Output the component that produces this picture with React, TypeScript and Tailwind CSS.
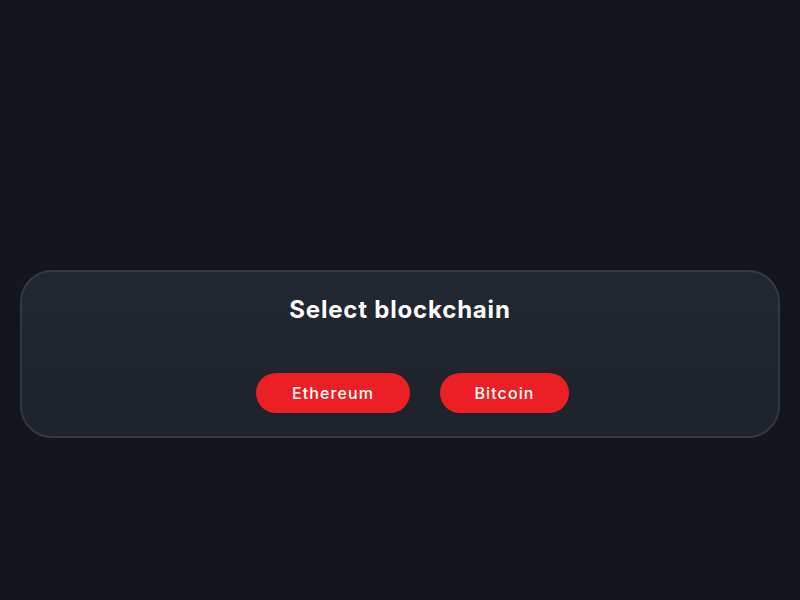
export default function App() {
  const chains = [
    { name: 'Ethereum', w: 'w-[154px]' },
    { name: 'Bitcoin', w: 'w-[129px]' },
  ];

  return (
    <main
      className="min-h-screen bg-[#13161d] px-5 pt-[270px]"
      style={{ fontFamily: 'Inter, "Open Sans", sans-serif' }}
    >
      <div className="rounded-[32px] border-2 border-[#313943] bg-gradient-to-b from-[#222832] to-[#1e222a] pt-[22px] pb-[23px]">
        <h1 className="text-center text-[24px] leading-[32px] font-bold tracking-[0.8px] text-white">Select blockchain</h1>
        <div className="mt-[47px] flex justify-center gap-[30px] pl-[25px]">
          {chains.map(c => (
            <button
              key={c.name}
              className={`${c.w} h-10 rounded-full bg-[#ec1f26] text-[16px] font-medium tracking-[1.1px] text-white`}
            >
              {c.name}
            </button>
          ))}
        </div>
      </div>
    </main>
  );
}
